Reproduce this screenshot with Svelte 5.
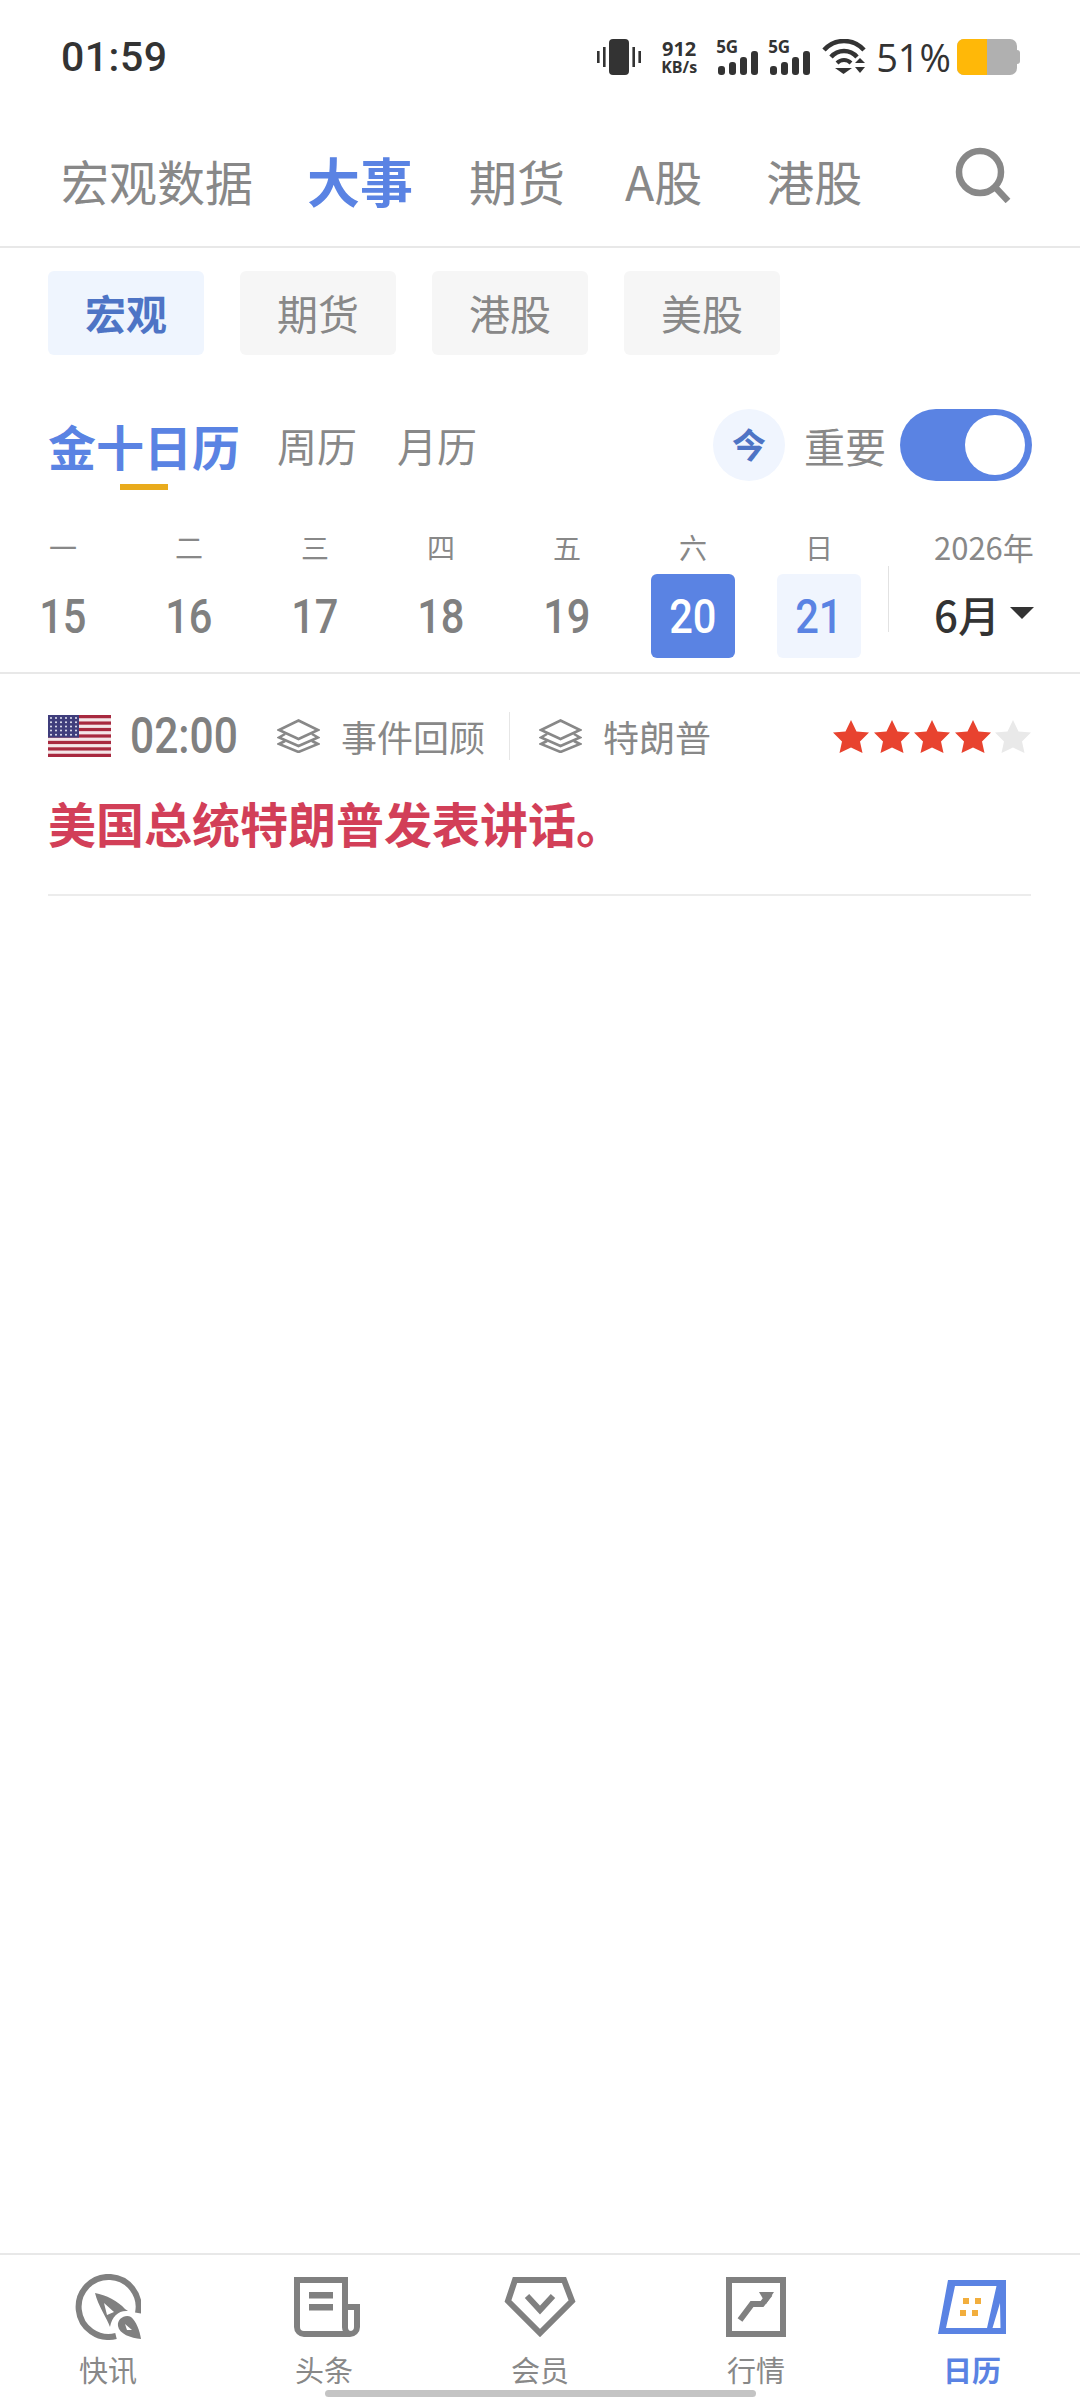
<script>
  const navTabs = [
    { label: '宏观数据' },
    { label: '大事', active: true },
    { label: '期货' },
    { label: 'A股' },
    { label: '港股' }
  ];
  const chips = ['宏观', '期货', '港股', '美股'];
  const days = [
    { w: '一', d: 15 },
    { w: '二', d: 16 },
    { w: '三', d: 17 },
    { w: '四', d: 18 },
    { w: '五', d: 19 },
    { w: '六', d: 20, state: 'selected' },
    { w: '日', d: 21, state: 'weekend' }
  ];
  const stars = [1, 1, 1, 1, 0];
  const stripes = [0, 2, 4, 6, 8, 10, 12];
  const flagRows = [0, 1, 2, 3, 4];
  const flagCols = [0, 1, 2, 3, 4, 5];
</script>

<div class="page">
  <div class="status">
    <span class="clock">01:59</span>
    <div class="status-icons">
      <svg class="vib" width="44" height="36" viewBox="0 0 44 36">
        <rect x="12" y="0" width="20" height="36" rx="4" fill="#333" />
        <rect x="6" y="8" width="2.6" height="20" fill="#333" />
        <rect x="35.4" y="8" width="2.6" height="20" fill="#333" />
        <rect x="0" y="12" width="2.6" height="12" fill="#333" />
        <rect x="41.4" y="12" width="2.6" height="12" fill="#333" />
      </svg>
      <div class="speed"><b>912</b><span>KB/s</span></div>
      {#each [0, 1] as sim}
        <div class="sim">
          <span>5G</span>
          <svg width="40" height="24" viewBox="0 0 40 24">
            <rect x="0" y="15" width="7" height="9" rx="3" fill="#333" />
            <rect x="11" y="11" width="7" height="13" rx="3" fill="#333" />
            <rect x="22" y="6" width="7" height="18" rx="3" fill="#333" />
            <rect x="33" y="0" width="7" height="24" rx="3" fill="#333" />
          </svg>
        </div>
      {/each}
      <svg class="wifi" width="44" height="36" viewBox="0 0 44 36">
        <path d="M2 11 C13 -1 31 -1 42 11" fill="none" stroke="#333" stroke-width="4.5" />
        <path d="M9 18 C16 10 28 10 35 18" fill="none" stroke="#333" stroke-width="4.5" />
        <path d="M15 24 C19 20 25 20 29 24" fill="none" stroke="#333" stroke-width="4" />
        <polygon points="13,29 30,29 21.5,35" fill="#333" />
        <polygon points="33,24 43,24 38,19" fill="#333" />
        <polygon points="33,28 43,28 38,34" fill="#333" />
      </svg>
      <span class="pct">51%</span>
      <div class="battery"><div class="level"></div></div>
    </div>
  </div>

  <nav class="nav">
    {#each navTabs as tab}
      <span class="nav-tab" class:active={tab.active}>{tab.label}</span>
    {/each}
    <svg class="search" width="56" height="56" viewBox="0 0 56 56">
      <circle cx="25" cy="25" r="21" fill="none" stroke="#888" stroke-width="6.5" />
      <path d="M40 40 L53 54" stroke="#888" stroke-width="6.5" fill="none" />
    </svg>
  </nav>

  <div class="chips">
    {#each chips as chip, i}
      <span class="chip" class:on={i === 0}>{chip}</span>
    {/each}
  </div>

  <div class="cal-head">
    <div class="cal-tab current">金十日历</div>
    <div class="cal-tab">周历</div>
    <div class="cal-tab">月历</div>
    <div class="today">今</div>
    <span class="important">重要</span>
    <div class="toggle"><div class="knob"></div></div>
  </div>

  <div class="week">
    {#each days as day}
      <div class="day">
        <span class="weekday">{day.w}</span>
        <span class="date {day.state || ''}"><span class="narrow">{day.d}</span></span>
      </div>
    {/each}
    <div class="month">
      <span class="year">2026年</span>
      <div class="month-val"><span>6月</span><i class="caret"></i></div>
    </div>
  </div>

  <article class="event">
    <div class="meta">
      <svg class="flag" width="63" height="42" viewBox="0 0 63 42">
        <rect width="63" height="42" rx="3" fill="#f4e6e8" />
        {#each stripes as s}
          <rect y={s * 3.23} width="63" height="3.23" fill="#a8293f" />
        {/each}
        <rect width="31" height="22.6" fill="#3f3d7c" />
        {#each flagRows as r}
          {#each flagCols as c}
            <circle cx={3 + c * 5} cy={3 + r * 4.2} r="1" fill="#e6e6f2" />
          {/each}
        {/each}
      </svg>
      <div class="time"><span class="narrow">02:00</span></div>
      <div class="tag first">
        <svg width="43" height="34" viewBox="0 0 43 34">
          <path d="M21.5 1.5 L41 11 L21.5 20 L2 11 Z M8 15 L2 18.5 L21.5 27 L41 18.5 L35 15 M8 22 L2 25 L21.5 33 L41 25 L35 22" fill="none" stroke="#888" stroke-width="2.6" />
        </svg>
        <span>事件回顾</span>
      </div>
      <div class="tag">
        <svg width="43" height="34" viewBox="0 0 43 34">
          <path d="M21.5 1.5 L41 11 L21.5 20 L2 11 Z M8 15 L2 18.5 L21.5 27 L41 18.5 L35 15 M8 22 L2 25 L21.5 33 L41 25 L35 22" fill="none" stroke="#888" stroke-width="2.6" />
        </svg>
        <span>特朗普</span>
      </div>
      <div class="stars">
        {#each stars as s}
          <svg width="36" height="33" viewBox="0 0 36 33">
            <polygon points="18,0 23.5,11.5 36,12.5 27,21.5 29.5,33 18,27.5 6.5,33 9,21.5 0,12.5 12.5,11.5" fill={s ? '#e8432f' : '#e9e9e9'} />
          </svg>
        {/each}
      </div>
    </div>
    <h2 class="title">美国总统特朗普发表讲话。</h2>
  </article>

  <div class="spacer"></div>

  <footer class="tabbar">
    <div class="bar-item">
      <div class="bar-icon">
        <svg width="66" height="66" viewBox="0 0 66 66">
          <path d="M63 39 A30 30 0 1 0 41 62" fill="none" stroke="#808080" stroke-width="6" />
          <path fill-rule="evenodd" d="M20 19 C31 21 43 27 50 35 L53 37 C44 36 37 42 35 53 C32 44 23 32 20 19 Z M29 29 L32 41 L39 38 Z" fill="#808080" />
          <path fill-rule="evenodd" d="M66 65 C56 64 44 60 43 52 C42 45 50 40 56 43 C61 47 65 57 66 65 Z M50 50 L52 56 L57 56 Z" fill="#808080" />
        </svg>
      </div>
      <span>快讯</span>
    </div>
    <div class="bar-item">
      <div class="bar-icon shift">
        <svg width="66" height="60" viewBox="0 0 66 60">
          <path d="M51 30 H63 V50 a7 7 0 0 1 -7 7 H10 a7 7 0 0 1 -7 -7 V3 H51 V50 a7 7 0 0 0 5 7" fill="none" stroke="#808080" stroke-width="6" />
          <rect x="15" y="15" width="24" height="6.5" fill="#808080" />
          <rect x="15" y="27" width="24" height="6.5" fill="#808080" />
        </svg>
      </div>
      <span>头条</span>
    </div>
    <div class="bar-item">
      <div class="bar-icon">
        <svg width="72" height="60" viewBox="0 0 72 60">
          <path d="M11 3 H60 L68 24 L36 56 L4 24 Z" fill="none" stroke="#808080" stroke-width="6" />
          <path d="M23 19 L36 33 L49 19" fill="none" stroke="#808080" stroke-width="6" />
        </svg>
      </div>
      <span>会员</span>
    </div>
    <div class="bar-item">
      <div class="bar-icon">
        <svg width="60" height="60" viewBox="0 0 60 60">
          <rect x="3" y="3" width="54" height="54" fill="none" stroke="#808080" stroke-width="6" />
          <path d="M14 43 L26 27 H36 L44 17" fill="none" stroke="#808080" stroke-width="6" />
          <polygon points="33,15 48,15 40,27" fill="#808080" />
        </svg>
      </div>
      <span>行情</span>
    </div>
    <div class="bar-item current">
      <div class="bar-icon">
        <svg width="68" height="54" viewBox="0 0 68 54">
          <path fill-rule="evenodd" d="M10 0 H68 V54 H0 Z M17 6 L8 48 H49 L58.5 6 Z M62 23 L54.5 48 H62.5 Z" fill="#5a83e3" />
          <rect x="25" y="18" width="6" height="6" fill="#f2ae3d" />
          <rect x="37" y="18" width="6" height="6" fill="#f2ae3d" />
          <rect x="22" y="30" width="6" height="6" fill="#f2ae3d" />
          <rect x="34" y="30" width="6" height="6" fill="#f2ae3d" />
        </svg>
      </div>
      <span>日历</span>
    </div>
    <div class="home-bar"></div>
  </footer>
</div>

<style>
  :global(body) {
    margin: 0;
    background: #fff;
  }

  .page {
    width: 1080px;
    height: 2400px;
    display: flex;
    flex-direction: column;
    background: #fff;
    font-family: "Noto Sans CJK SC", "Noto Sans", sans-serif;
    color: #888;
    overflow: hidden;
  }

  /* digits in the reference are condensed, no narrow family installed */
  .narrow {
    display: inline-block;
    transform: scaleX(0.85);
  }

  /* status bar */
  .status {
    height: 115px;
    box-sizing: border-box;
    padding: 39px 63px 0 61px;
    display: flex;
    justify-content: space-between;
    align-items: flex-start;
    color: #333;
    flex-shrink: 0;
  }

  .clock {
    font-family: Roboto, sans-serif;
    font-weight: 500;
    font-size: 41px;
    line-height: 36px;
    letter-spacing: 0.5px;
  }

  .status-icons {
    display: flex;
    align-items: flex-start;
    height: 36px;
  }

  .vib {
    margin-right: 17px;
  }

  .speed {
    display: flex;
    flex-direction: column;
    align-items: center;
    width: 42px;
    margin-right: 18px;
    font-family: "Open Sans", sans-serif;
  }

  .speed b {
    font-size: 20px;
    line-height: 20px;
    font-weight: 700;
  }

  .speed span {
    font-size: 16px;
    line-height: 17px;
    font-weight: 700;
  }

  .sim {
    position: relative;
    width: 40px;
    height: 36px;
    margin-right: 12px;
    display: flex;
    flex-direction: column;
    justify-content: flex-end;
  }

  .sim span {
    position: absolute;
    left: -2px;
    top: 1px;
    font-family: "Open Sans", sans-serif;
    font-size: 17px;
    line-height: 14px;
    font-weight: 700;
  }

  .sim svg {
    display: block;
  }

  .wifi {
    margin-right: 10px;
  }

  .pct {
    font-family: "Open Sans", sans-serif;
    font-size: 38px;
    line-height: 36px;
    margin-right: 6px;
  }

  .battery {
    width: 60px;
    height: 36px;
    border-radius: 7px;
    background: #b0b0b0;
    position: relative;
  }

  .battery::after {
    content: "";
    position: absolute;
    right: -3px;
    top: 11px;
    width: 3px;
    height: 14px;
    border-radius: 0 3px 3px 0;
    background: #b0b0b0;
  }

  .level {
    width: 30px;
    height: 36px;
    border-radius: 7px 0 0 7px;
    background: #ffb808;
  }

  /* top nav */
  .nav {
    height: 133px;
    box-sizing: border-box;
    padding: 0 69px 2px 61px;
    display: flex;
    align-items: center;
    gap: 56px;
    border-bottom: 2px solid #e8e8e8;
    flex-shrink: 0;
  }

  .nav-tab {
    font-size: 48px;
    line-height: 60px;
    color: #888;
  }

  .nav-tab:nth-child(1) {
    margin-right: -2px;
  }

  .nav-tab:nth-child(3) {
    margin-right: 4px;
  }

  .nav-tab:nth-child(4) {
    margin-right: 8px;
  }

  .nav-tab.active {
    font-size: 53px;
    font-weight: 700;
    color: #5a83e3;
  }

  .search {
    margin-left: auto;
    margin-top: -10px;
  }

  /* chips */
  .chips {
    padding: 23px 0 0 48px;
    display: flex;
    gap: 36px;
    flex-shrink: 0;
  }

  .chip {
    width: 156px;
    height: 84px;
    line-height: 82px;
    text-align: center;
    border-radius: 6px;
    background: #f6f6f6;
    font-size: 41px;
    color: #888;
  }

  .chip.on {
    background: #eff5fe;
    color: #4e74c5;
    font-weight: 700;
  }

  /* calendar header */
  .cal-head {
    height: 72px;
    margin-top: 54px;
    padding: 0 48px;
    display: flex;
    align-items: center;
    gap: 40px;
    flex-shrink: 0;
  }

  .cal-tab {
    font-size: 40px;
    line-height: 72px;
    color: #888;
    position: relative;
  }

  .cal-tab.current {
    margin-right: -3px;
    font-size: 48px;
    font-weight: 700;
    color: #5a83e3;
  }

  .cal-tab.current::after {
    content: "";
    position: absolute;
    left: 72px;
    top: 75px;
    width: 48px;
    height: 6px;
    background: #e9ab1c;
  }

  .today {
    width: 72px;
    height: 72px;
    margin-left: auto;
    border-radius: 50%;
    background: #f0f5fe;
    color: #4e74c5;
    font-size: 34px;
    font-weight: 700;
    line-height: 70px;
    text-align: center;
  }

  .important {
    margin-left: -21px;
    font-size: 41px;
    color: #888;
  }

  .toggle {
    width: 132px;
    height: 72px;
    margin-left: -26px;
    border-radius: 36px;
    background: #5a83e3;
    position: relative;
  }

  .knob {
    position: absolute;
    right: 7px;
    top: 6px;
    width: 60px;
    height: 60px;
    border-radius: 50%;
    background: #fff;
  }

  /* week strip */
  .week {
    margin-top: 49px;
    height: 128px;
    display: grid;
    grid-template-columns: repeat(7, 126px) 1fr;
    border-bottom: 2px solid #e8e8e8;
    padding-bottom: 14px;
    flex-shrink: 0;
  }

  .day {
    display: flex;
    flex-direction: column;
    align-items: center;
  }

  .weekday {
    margin-top: -3px;
    font-size: 28px;
    line-height: 40px;
    color: #888;
  }

  .date {
    margin-top: 7px;
    width: 84px;
    height: 84px;
    border-radius: 6px;
    line-height: 86px;
    text-align: center;
    font-family: Roboto, sans-serif;
    font-size: 49px;
    font-weight: 500;
    color: #808080;
  }

  .date.selected {
    background: #5a83e3;
    color: #fff;
  }

  .date.weekend {
    background: #f0f5fe;
    color: #5a83e3;
  }

  .month {
    position: relative;
    padding-left: 52px;
  }

  .month::before {
    content: "";
    position: absolute;
    left: 6px;
    top: 36px;
    width: 1px;
    height: 66px;
    background: #e2e2e2;
  }

  .year {
    display: block;
    font-size: 31px;
    line-height: 40px;
    white-space: nowrap;
    margin-top: -3px;
  }

  .month-val {
    display: flex;
    align-items: center;
    margin-top: 4px;
    height: 84px;
    color: #333;
    font-size: 42px;
    font-weight: 500;
  }

  .caret {
    margin-left: 10px;
    margin-top: -1px;
    width: 0;
    height: 0;
    border-left: 12px solid transparent;
    border-right: 12px solid transparent;
    border-top: 12px solid #333;
  }

  /* event card */
  .event {
    margin: 0 49px 0 48px;
    border-bottom: 2px solid #ececec;
    height: 222px;
    box-sizing: border-box;
    padding-top: 38px;
    flex-shrink: 0;
  }

  .meta {
    display: flex;
    align-items: center;
    height: 48px;
  }

  .flag {
    display: block;
  }

  .time {
    margin-left: 19px;
    width: 106px;
    font-family: Roboto, sans-serif;
    font-size: 50px;
    font-weight: 500;
    color: #808080;
  }

  .time .narrow {
    transform-origin: left center;
  }

  .tag {
    display: flex;
    align-items: center;
    gap: 21px;
    font-size: 36px;
    height: 48px;
    color: #888;
  }

  .tag.first {
    margin-left: 41px;
    padding-right: 24px;
    border-right: 1px solid #e6e6e6;
  }

  .tag:not(.first) {
    margin-left: 29px;
  }

  .stars {
    margin-left: auto;
    display: flex;
    gap: 4.5px;
  }

  .stars svg {
    display: block;
  }

  .title {
    margin: 30px 0 0;
    font-size: 48px;
    line-height: 64px;
    font-weight: 700;
    color: #d23f58;
  }

  .spacer {
    flex: 1;
  }

  /* bottom tabs */
  .tabbar {
    height: 147px;
    box-sizing: border-box;
    border-top: 2px solid #e8e8e8;
    display: grid;
    grid-template-columns: repeat(5, 216px);
    position: relative;
    flex-shrink: 0;
  }

  .bar-item {
    padding-top: 19px;
    display: flex;
    flex-direction: column;
    align-items: center;
    font-size: 29px;
    line-height: 40px;
    color: #888;
  }

  .bar-icon {
    height: 66px;
    margin-bottom: 9px;
    display: flex;
    align-items: center;
  }

  .bar-icon.shift {
    margin-left: 6px;
  }

  .bar-item.current {
    color: #5a83e3;
    font-weight: 700;
  }

  .home-bar {
    position: absolute;
    left: 325px;
    bottom: 3px;
    width: 431px;
    height: 7px;
    border-radius: 4px;
    background: #c4c4c4;
  }
</style>
